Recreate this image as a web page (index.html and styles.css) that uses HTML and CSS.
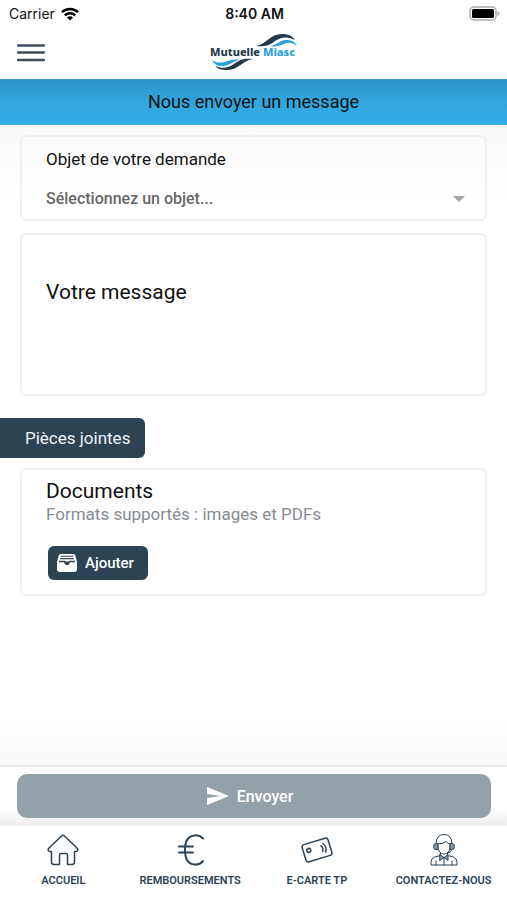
FILE: index.html
```html
<!DOCTYPE html>
<html lang="fr">
<head>
<meta charset="utf-8">
<meta name="viewport" content="width=device-width, initial-scale=1">
<title>Mutuelle Miasc</title>
<link rel="stylesheet" href="styles.css">
</head>
<body>
<div class="app">
  <div class="status">
    <div class="carrier">Carrier
      <svg width="18" height="14" viewBox="0 0 18 14" aria-hidden="true"><path d="M1 5.2a11.5 11.5 0 0 1 16 0M3.8 8.3a7.4 7.4 0 0 1 10.4 0" fill="none" stroke="#000" stroke-width="2.5"/><path d="M9 13.6 6 10.6a4.3 4.3 0 0 1 6 0z"/></svg>
    </div>
    <div class="time">8:40 AM</div>
    <svg class="battery" width="31" height="15" viewBox="0 0 31 15" aria-hidden="true"><rect x="1" y="1" width="26" height="13" rx="4" fill="#fff" stroke="#aaa" stroke-width="1.5"/><rect x="3" y="3" width="22" height="9" rx="1.5"/><path d="M28.5 5v5q2-.8 2-2.500t-2-2.500z" fill="#aaa"/></svg>
  </div>
  <header class="header">
    <button class="menu" type="button" aria-label="Menu"><svg width="28" height="18" viewBox="0 0 28 18"><path d="M1 1.500h26M1 8.500h26M1 16h26" fill="none" stroke="#3d4d5f" stroke-width="2.300" stroke-linecap="round"/></svg></button>
    <svg class="logo" width="90" height="40" viewBox="0 0 90 40" role="img" aria-label="Mutuelle Miasc">
      <path d="M47 13C58 11 61 1 73 1c7 0 10 2 13 6-8-4-14-3-20 1-6 5-12 6-19 5z" fill="#24394a"/>
      <path d="M61 13c7-1 10-6 16-6 6 0 9 2 11 6-5-4-9-4-13-2-5 2-9 3-14 2z" fill="#2ba0dc"/>
      <path d="M3 27c4 3 8 3 13 2 5-2 9-3 15-2-7 1-11 6-17 6-6 0-9-2-11-6z" fill="#2ba0dc"/>
      <path d="M6 33c8 3 13 2 19-2 6-5 11-6 19-5-10 1-15 11-25 11-7 0-10-1-13-4z" fill="#24394a"/>
      <text class="logo-text" x="1" y="23"><tspan fill="#24394a">Mutuelle</tspan><tspan fill="#2ba0dc"> Miasc</tspan></text>
    </svg>
  </header>
  <h1 class="title">Nous envoyer un message</h1>
  <main class="content">
    <section class="card subject">
      <label class="subject-label" for="objet">Objet de votre demande</label>
      <div class="select-row">
        <select id="objet"><option>Sélectionnez un objet...</option></select>
        <svg width="12" height="6" viewBox="0 0 12 6" aria-hidden="true"><path d="M0 0h12L6 6z" fill="#a6a6a6"/></svg>
      </div>
    </section>
    <textarea class="card message" aria-label="Votre message" placeholder="Votre message"></textarea>
    <h2 class="tag">Pièces jointes</h2>
    <section class="card documents">
      <h3>Documents</h3>
      <p>Formats supportés : images et PDFs</p>
      <button class="add" type="button">
        <svg width="20" height="18" viewBox="0 0 20 18" aria-hidden="true"><path d="M4 0h12q2 0 2.500 2L20 8v7q0 3-3 3H3q-3 0-3-3V8l1.500-6Q2 0 4 0z" fill="#fff"/><path d="M3.600 2.200h12.800M3.200 4.600h13.600" stroke="#2c4354" stroke-width="1.100"/><path d="M2 7.500h5.500q.5 3 2.500 3t2.500-3H18" fill="none" stroke="#2c4354" stroke-width="1.300"/><path d="M7.500 7.500h5q-.5 3-2.500 3t-2.500-3z" fill="#2c4354"/></svg>
        Ajouter
      </button>
    </section>
  </main>
  <div class="send-bar">
    <button class="send" type="button">
      <svg width="22" height="18" viewBox="0 0 22 18" aria-hidden="true"><path d="M0 0l22 9L0 18v-7l14-2L0 7z" fill="#fff"/></svg>
      Envoyer
    </button>
  </div>
  <nav class="tabs">
    <a href="#accueil">
      <svg width="34" height="34" viewBox="0 0 34 34" aria-hidden="true"><path d="M15.800 2.800q1.200-1 2.400 0L31 15q1.500 1.700.3 3-.8.800-2.300.500h-.5V29q0 2.500-2.500 2.500h-4.500V22q0-1.500-1.500-1.500h-5q-1.500 0-1.500 1.500v9.500H8q-2.500 0-2.500-2.500V18.500H5q-1.500.3-2.300-.5-1.200-1.300.3-3z"/></svg>
      ACCUEIL
    </a>
    <a href="#remboursements">
      <svg width="34" height="34" viewBox="0 0 34 34" aria-hidden="true"><path class="bold" d="M30 5.500C27 2.500 24 2 21.500 2.500 15 3 12 8 12 17s3 14 9.500 14.500c3 .2 6-.5 8.500-3.500M6 13.500h14M6 19.500h14"/></svg>
      REMBOURSEMENTS
    </a>
    <a href="#carte">
      <svg width="34" height="34" viewBox="0 0 34 34" aria-hidden="true"><g transform="rotate(-17 17 17)"><rect x="3.500" y="8" width="27" height="18" rx="2.500"/><circle cx="9" cy="15" r="2"/><path d="M22 14q2 3 0 6M24.500 12.500q3.500 4.500 0 9"/></g></svg>
      E-CARTE TP
    </a>
    <a href="#contact">
      <svg class="agent" width="34" height="34" viewBox="0 0 34 34" aria-hidden="true"><path d="M9 11q0-9.500 8-9.500T25 11M11 11q5 0 8-2.500 2 2.500 4 2.500v3c0 4-2.500 7-6 7s-6-3-6-7z"/><path d="M10.500 10.500H9q-2.500 0-2.500 3T9 16.500h1.500zM23.500 10.500H25q2.500 0 2.500 3t-2.500 3h-1.500z" fill="#8499aa"/><path d="M25 16.500q-1 3.500-5 3.500M13.500 20v2.500L7.500 24Q4 25.500 4 29v3h26v-3q0-3.500-3.500-5l-6-1.500V20M17 25v7M9 28v4M25 28v4"/><path d="M13 21.500l4 3 4-3v6l-4-3-4 3z" fill="#8499aa"/></svg>
      CONTACTEZ-NOUS
    </a>
  </nav>
</div>
</body>
</html>
```
FILE: styles.css
```css
* { box-sizing: border-box; }
body { margin: 0; background: #fff; color: #111; font-family: Roboto, "Liberation Sans", sans-serif; }
button, select, textarea { font: inherit; }
h1, h2, h3, p { margin: 0; font-weight: 400; }
svg { flex: none; }

.app { min-height: 100vh; display: flex; flex-direction: column; }

.status { height: 27px; padding: 0 7px 0 9px; display: grid; grid-template-columns: 1fr auto 1fr; align-items: center; font-family: Inter, sans-serif; font-size: 14px; }
.carrier { display: flex; align-items: center; gap: 6px; }
.time { font-weight: 600; }
.battery { justify-self: end; }

.header { height: 52px; padding: 0 17px; display: grid; grid-template-columns: 1fr auto 1fr; align-items: center; }
.menu { justify-self: start; display: flex; padding: 0; border: 0; background: none; }
.logo-text { font-family: "Noto Sans", sans-serif; font-size: 11px; font-weight: 800; }

.title { height: 46px; background: linear-gradient(#2c94c8, #31a6de 50%, #33ade6); text-align: center; font-size: 18px; line-height: 46px; }

.content { flex: 1; padding: 10px 20px 24px; display: flex; flex-direction: column; align-items: stretch; background: linear-gradient(#f9f9f9, #fff 80px, #fff calc(100% - 50px), #f9f9f9); }
.card { border: 2px solid #f0f0f0; border-radius: 6px; background: transparent; }

.subject { height: 86px; padding: 12px 20px 0 24px; }
.subject-label { display: block; font-size: 17px; line-height: 20px; }
.select-row { display: flex; align-items: center; margin-top: 20px; }
.select-row select { flex: 1; appearance: none; padding: 0; border: 0; background: none; color: #666; font-size: 16px; font-weight: 500; line-height: 20px; }

.message { height: 163px; margin-top: 12px; padding: 45px 24px 0; resize: none; font-size: 21px; line-height: 24px; }
.message::placeholder { color: #111; opacity: 1; }

.tag { align-self: flex-start; height: 40px; margin: 22px 0 10px -20px; padding: 0 15px 0 25px; border-radius: 0 6px 6px 0; background: #2c4354; color: #eef3f7; font-size: 17px; line-height: 40px; }

.documents { height: 128px; padding: 9px 24px; }
.documents h3 { font-size: 21px; line-height: 24px; }
.documents p { color: #858b91; font-size: 17px; line-height: 22px; }
.add { display: flex; align-items: center; gap: 8px; height: 34px; margin: 21px 0 0 2px; padding: 0 14px 0 9px; border: 0; border-radius: 6px; background: #2c4354; color: #fff; font-size: 15px; font-weight: 500; }

.send-bar { height: 61px; padding: 7px 16px 0 17px; border-top: 2px solid #ececec; background: linear-gradient(#fff 70%, #ededed); }
.send { width: 100%; height: 44px; display: flex; align-items: center; justify-content: center; gap: 8px; padding: 0 8px 0 0; border: 0; border-radius: 10px; background: #95a1a9; color: #fff; font-size: 16px; font-weight: 500; }

.tabs { height: 74px; padding-top: 7px; display: grid; grid-template-columns: repeat(4, 1fr); background: #fff; }
.tabs a { display: flex; flex-direction: column; align-items: center; gap: 7px; color: #2c4354; font-size: 11px; font-weight: 600; line-height: 14px; text-decoration: none; }
.tabs svg { fill: none; stroke: #2c4354; stroke-width: 1.5px; stroke-linejoin: round; stroke-linecap: round; }
.tabs .bold { stroke-width: 2px; }
.tabs .agent { stroke-width: 1px; }
```
